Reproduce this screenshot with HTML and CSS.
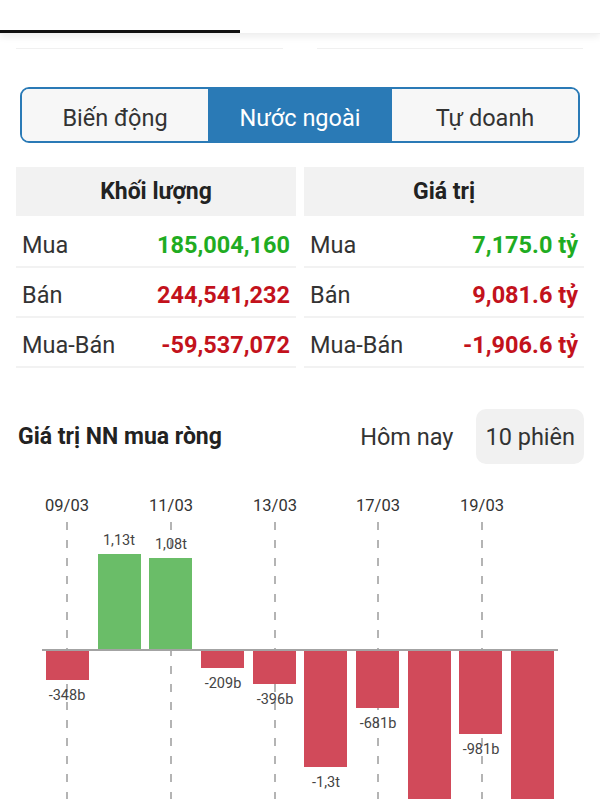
FILE: index.html
```html
<!DOCTYPE html>
<html lang="vi">
<head>
    <meta charset="UTF-8">
    <meta name="viewport" content="width=device-width, initial-scale=1.0">
    <title>Nước ngoài</title>
    <link rel="stylesheet" href="styles.css">
</head>
<body>
    <div class="tabbar">
        <span class="tab-indicator"></span>
    </div>

    <div class="prev-rows">
        <div class="prev-cell"></div>
        <div class="prev-cell"></div>
    </div>

    <div class="segmented">
        <button class="segment">Biến động</button>
        <button class="segment active">Nước ngoài</button>
        <button class="segment">Tự doanh</button>
    </div>

    <div class="stats">
        <div class="stat-table">
            <div class="stat-head">Khối lượng</div>
            <div class="stat-row"><span>Mua</span><b class="up">185,004,160</b></div>
            <div class="stat-row"><span>Bán</span><b class="down">244,541,232</b></div>
            <div class="stat-row"><span>Mua-Bán</span><b class="down">-59,537,072</b></div>
        </div>
        <div class="stat-table">
            <div class="stat-head">Giá trị</div>
            <div class="stat-row"><span>Mua</span><b class="up">7,175.0 tỷ</b></div>
            <div class="stat-row"><span>Bán</span><b class="down">9,081.6 tỷ</b></div>
            <div class="stat-row"><span>Mua-Bán</span><b class="down">-1,906.6 tỷ</b></div>
        </div>
    </div>

    <div class="section-head">
        <h2>Giá trị NN mua ròng</h2>
        <div class="range">
            <button class="range-btn">Hôm nay</button>
            <button class="range-btn selected">10 phiên</button>
        </div>
    </div>

    <svg class="chart" viewBox="0 465 600 335" width="600" height="335">
        <g class="dates">
            <text x="67" y="512">09/03</text>
            <text x="171" y="512">11/03</text>
            <text x="275" y="512">13/03</text>
            <text x="378" y="512">17/03</text>
            <text x="482" y="512">19/03</text>
        </g>
        <g class="grid">
            <line x1="67" y1="523" x2="67" y2="800"/>
            <line x1="171" y1="523" x2="171" y2="800"/>
            <line x1="275" y1="523" x2="275" y2="800"/>
            <line x1="378" y1="523" x2="378" y2="800"/>
            <line x1="482" y1="523" x2="482" y2="800"/>
        </g>
        <!-- bars: baseline at y=651 -->
        <rect class="bar-down" x="46" y="651" width="43" height="30"/>
        <rect class="bar-up" x="98" y="555" width="43" height="96"/>
        <rect class="bar-up" x="149" y="559" width="43" height="92"/>
        <rect class="bar-down" x="201" y="651" width="43" height="18"/>
        <rect class="bar-down" x="253" y="651" width="43" height="34"/>
        <rect class="bar-down" x="304" y="651" width="43" height="117"/>
        <rect class="bar-down" x="356" y="651" width="43" height="58"/>
        <rect class="bar-down" x="408" y="651" width="43" height="160"/>
        <rect class="bar-down" x="459" y="651" width="43" height="84"/>
        <rect class="bar-down" x="511" y="651" width="43" height="160"/>
        <line class="axis" x1="42" y1="651" x2="558" y2="651"/>
        <g class="values">
            <text x="67" y="701">-348b</text>
            <text x="119" y="546">1,13t</text>
            <text x="171" y="550">1,08t</text>
            <text x="223" y="689">-209b</text>
            <text x="275" y="705">-396b</text>
            <text x="326" y="788">-1,3t</text>
            <text x="378" y="729">-681b</text>
            <text x="481" y="755">-981b</text>
        </g>
    </svg>
</body>
</html>
```

FILE: styles.css
```css
body {
    margin: 0;
    font-family: Roboto, 'Noto Sans', sans-serif;
    background: #fff;
    color: #222;
    width: 600px;
    height: 800px;
    overflow: hidden;
}

button {
    font-family: inherit;
    border: none;
    cursor: pointer;
}

.tabbar {
    height: 33px;
    display: flex;
    align-items: flex-end;
    border-bottom: 1px solid #f0f0f0;
    box-shadow: 0 3px 7px rgba(0, 0, 0, 0.07);
}

.tab-indicator {
    width: 240px;
    height: 3px;
    background: #111;
}

.prev-rows {
    display: grid;
    grid-template-columns: 267px 266px;
    column-gap: 34px;
    padding: 0 16px;
}

.prev-cell {
    height: 14px;
    border-bottom: 1px solid #f0f0f0;
}

.segmented {
    margin: 38px 20px 0;
    height: 56px;
    box-sizing: border-box;
    border: 2px solid #2a7ab6;
    border-radius: 9px;
    overflow: hidden;
    display: grid;
    grid-template-columns: 1fr 184px 1fr;
}

.segment {
    background: #f7f7f7;
    color: #333;
    font-size: 23.5px;
    padding: 6px 0 0;
}

.segment.active {
    background: #2a7ab6;
    color: #fff;
}

.stats {
    margin-top: 24px;
    padding: 0 16px;
    display: grid;
    grid-template-columns: 1fr 1fr;
    column-gap: 8px;
}

.stat-head {
    height: 49px;
    margin-bottom: 2px;
    background: #f2f2f2;
    display: flex;
    align-items: center;
    justify-content: center;
    font-size: 23px;
    font-weight: bold;
    color: #222;
}

.stat-row {
    height: 50px;
    box-sizing: border-box;
    border-bottom: 2px solid #f2f2f2;
    display: flex;
    align-items: center;
    justify-content: space-between;
    padding: 5px 6px 0;
    font-size: 23.5px;
    color: #333;
}

.stat-row b {
    font-size: 23.5px;
}

.up {
    color: #1fac22;
}

.down {
    color: #c3121c;
}

.section-head {
    margin-top: 41px;
    height: 55px;
    display: flex;
    align-items: center;
    justify-content: space-between;
    padding: 0 16px 0 18px;
}

.section-head h2 {
    margin: 0;
    font-size: 23px;
    font-weight: bold;
    color: #222;
}

.range {
    display: flex;
    gap: 14px;
    height: 100%;
}

.range-btn {
    background: none;
    color: #333;
    font-size: 23.5px;
    padding: 0 9px;
    border-radius: 10px;
}

.range-btn.selected {
    background: #f1f1f1;
}

.chart {
    display: block;
}

.dates text {
    font-size: 16.5px;
    fill: #333;
    text-anchor: middle;
}

.grid line {
    stroke: #9c9c9c;
    stroke-width: 1.5;
    stroke-dasharray: 8 10;
}

.bar-up {
    fill: #6abd68;
}

.bar-down {
    fill: #d14a5a;
}

.axis {
    stroke: #a3a3a3;
    stroke-width: 2;
}

.values text {
    font-size: 14.5px;
    fill: #444;
    text-anchor: middle;
}
```
